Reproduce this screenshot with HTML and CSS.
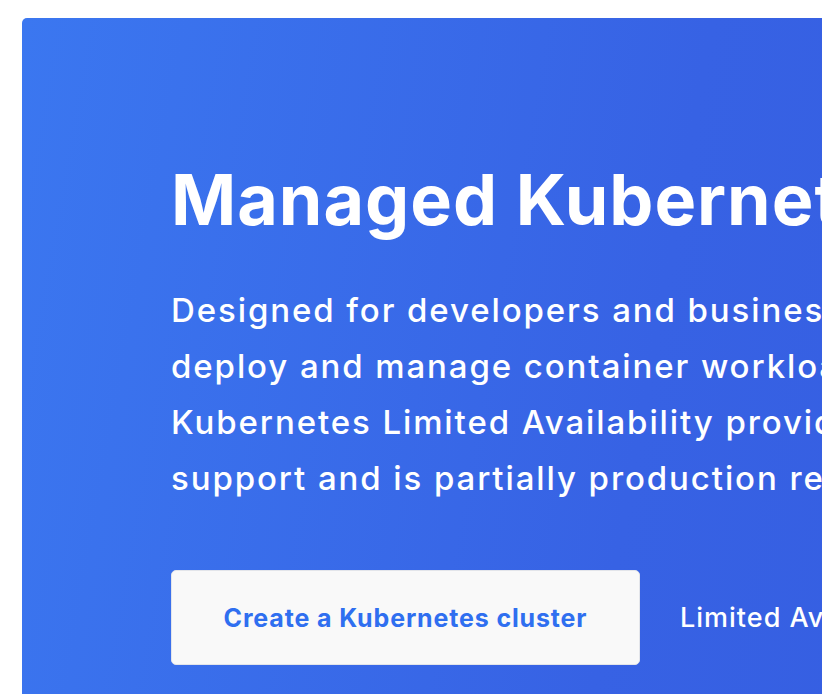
FILE: index.html
```html
<!DOCTYPE html>
<html lang="en">
<head>
<meta charset="utf-8">
<title>Managed Kubernetes</title>
<link rel="stylesheet" href="styles.css">
</head>
<body>
<main class="page">
  <section class="hero">
    <h1 class="hero-title">Managed Kubernetes</h1>
    <p class="hero-text">Designed for developers and businesses who want an easy way to<br>deploy and manage container workloads in the cloud. DigitalOcean<br>Kubernetes Limited Availability provides full functionality and<br>support and is partially production ready.</p>
    <div class="hero-actions">
      <button class="btn-primary" type="button">Create a Kubernetes cluster</button>
      <a class="hero-link" href="#">Limited Availability details</a>
    </div>
  </section>
</main>
</body>
</html>
```

FILE: styles.css
```css
html, body {
  margin: 0;
  padding: 0;
  overflow: hidden;
  background: #ffffff;
}

.page {
  padding: 18px 0 0 22px;
  width: 1500px;
}

.hero {
  width: 1400px;
  min-height: 760px;
  box-sizing: border-box;
  padding: 142px 0 0 149px;
  border-radius: 5px;
  background: linear-gradient(100deg, #3b77f0 0%, #3762e4 45%, #3358dd 100%);
  font-family: "Inter", "Noto Sans", sans-serif;
  color: #ffffff;
}

.hero-title {
  margin: 0;
  font-size: 70px;
  line-height: 80px;
  font-weight: 700;
  letter-spacing: 1px;
  white-space: nowrap;
}

.hero-text {
  margin: 42px 0 0;
  font-size: 33px;
  line-height: 56px;
  font-weight: 500;
  letter-spacing: 1.9px;
  white-space: nowrap;
}

.hero-actions {
  display: flex;
  align-items: center;
  gap: 40px;
  margin-top: 64px;
}

.btn-primary {
  width: 469px;
  height: 95px;
  border: 1px solid #e3e5ea;
  border-radius: 5px;
  background: #f9f9f9;
  color: #2f6ff0;
  font-family: "Inter", "Noto Sans", sans-serif;
  font-size: 25px;
  font-weight: 700;
  letter-spacing: 0.85px;
  padding: 0;
}

.hero-link {
  color: #ffffff;
  text-decoration: none;
  font-size: 27px;
  font-weight: 500;
  letter-spacing: 1px;
  white-space: nowrap;
}
```
